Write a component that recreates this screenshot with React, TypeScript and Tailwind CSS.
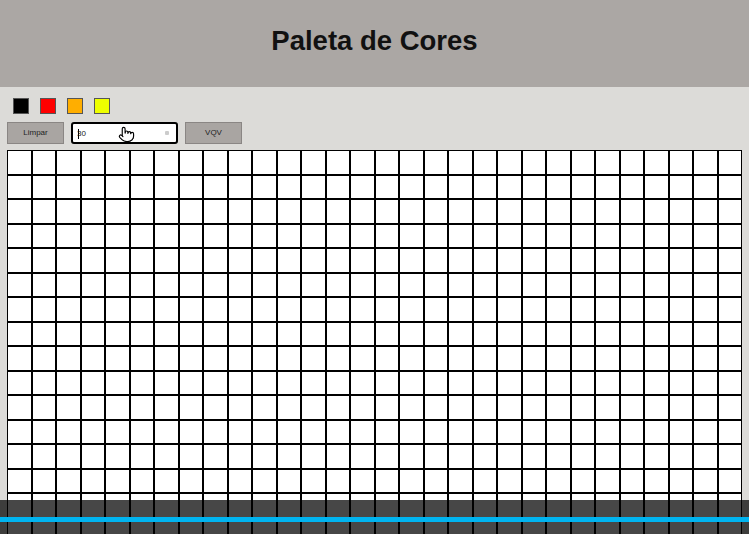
import React, { useState } from 'react';
import { Pointer } from 'lucide-react';

const colors = ['#000000', '#ff0000', '#ffae00', '#eeff00'];

const App: React.FC = () => {
  const [size, setSize] = useState('30');
  const n = 30;
  const cells = Array.from({ length: n * n });

  return (
    <div className="min-h-screen bg-[#dcdbd8] font-['Liberation_Sans',Arial,sans-serif]">
      <header className="h-[87px] bg-[#aba7a4] flex items-center justify-center">
        <h1 className="text-[27.5px] font-bold text-[#111] leading-none pb-[5px]">Paleta de Cores</h1>
      </header>

      <main className="px-[7px] pt-[11px]">
        <div className="flex gap-[11px] pl-[6px]">
          {colors.map((c) => (
            <div key={c} className="w-[16px] h-[16px] border border-[#555]" style={{ backgroundColor: c }} />
          ))}
        </div>

        <div className="flex items-center gap-[7px] mt-[8px] relative">
          <button className="w-[57px] h-[22px] bg-[#a9a5a2] border border-[#8a8684] text-[8px] text-[#222]">
            Limpar
          </button>
          <div className="relative w-[107px] h-[22px] bg-white border-2 border-black rounded-[3px] flex items-center">
            <span className="absolute left-[5px] top-[5px] w-px h-[10px] bg-black" />
            <input
              type="text"
              value={size}
              onChange={(e) => setSize(e.target.value)}
              className="w-full h-full bg-transparent pl-[4px] text-[8px] text-[#222] outline-none"
            />
            <span className="absolute right-[7px] top-[7px] w-[4px] h-[4px] bg-[#ccc] rounded-[1px]" />
            <Pointer
              size={17}
              strokeWidth={1.6}
              className="absolute left-[45px] top-[2px] text-black fill-white"
            />
          </div>
          <button className="w-[57px] h-[22px] bg-[#a9a5a2] border border-[#8a8684] text-[8px] text-[#222]">
            VQV
          </button>
        </div>

        <div className="mt-[6px] w-[735px] grid grid-cols-[repeat(30,1fr)]">
          {cells.map((_, i) => (
            <div key={i} className="aspect-square bg-white border border-black" />
          ))}
        </div>
      </main>

      <div className="fixed left-0 right-0 bottom-0 h-[34px] bg-black/[0.72]">
        <div className="mt-[17px] h-[5px] bg-[#00b4f0]" />
      </div>
    </div>
  );
};

export default App;
